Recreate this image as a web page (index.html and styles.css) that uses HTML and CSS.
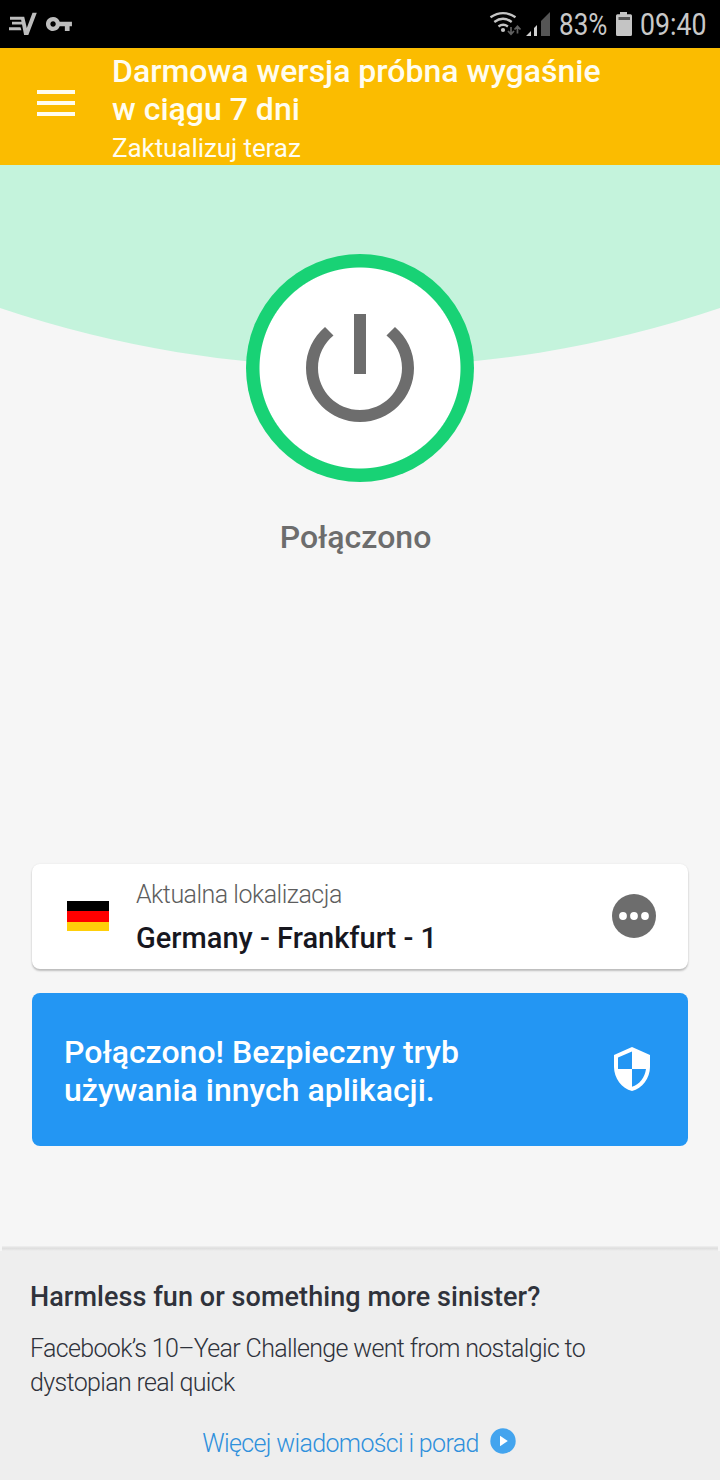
FILE: index.html
```html
<!DOCTYPE html>
<html lang="pl">
<head>
<meta charset="utf-8">
<title>VPN</title>
<link rel="stylesheet" href="styles.css">
</head>
<body>
<div class="screen">
  <div class="status">
    <svg class="status-left" width="80" height="48" viewBox="0 0 80 48" fill="#bdbdbd">
      <path d="M10 16.800h12.500l.9 3H10zM12 21.800h12l.7 2.800H12zM9 27.300h11.500l.9 2.900H9zM20.500 16.800h3.700l2.600 11.200 5.700-15.200h4.300L28.300 35h-4.200z"/>
      <path transform="translate(44.800 9.840) scale(1.180)" d="M12.650 10C11.830 7.670 9.610 6 7 6c-3.310 0-6 2.690-6 6s2.690 6 6 6c2.610 0 4.830-1.670 5.650-4H17v4h4v-4h2v-4H12.650zM7 14.300c-1.300 0-2.300-1-2.300-2.300s1-2.300 2.300-2.300 2.300 1 2.300 2.300-1 2.300-2.300 2.300z"/>
    </svg>
    <div class="status-right">
      <svg width="64" height="48" viewBox="488 0 64 48">
        <g fill="none" stroke="#c4c4c4" stroke-width="2.400">
          <path d="M490.500 17.300q12.500-8.300 25 0M494.300 22q8.700-6.300 17.400 0M498.500 26.500q4.700-3.400 9.400 0"/>
        </g>
        <circle cx="503" cy="30" r="2.100" fill="#c4c4c4"/>
        <g stroke="#606060" stroke-width="1.700" fill="none">
          <path d="M511 27v7M508 31l3 3.200 3-3.200M517.500 33.500v-7M514.500 29.500l3-3.200 3 3.200"/>
        </g>
        <path d="M526 36l5-5v5zM534 28l3-3v11h-3z" fill="#d0d0d0"/>
        <path d="M541 21l9-9v24h-9z" fill="#555"/>
      </svg>
      <span class="battery-text"><span class="narrow">83%</span></span>
      <svg width="18" height="48" viewBox="615 0 18 48">
        <path d="M620 12h7v2.200h3.500q1.500 0 1.500 1.500V34.500q0 1.500-1.500 1.500h-13q-1.500 0-1.500-1.500V15.700q0-1.500 1.500-1.500h2.500z" fill="#c4c4c4"/>
        <path d="M618.500 17h11.500v3h-11.500z" fill="#555"/>
      </svg>
      <span class="clock"><span class="narrow">09:40</span></span>
    </div>
  </div>

  <header class="header">
    <div class="menu"><i class="bar"></i><i class="bar"></i><i class="bar"></i></div>
    <div>
      <div class="title">Darmowa wersja próbna wygaśnie<br>w ciągu 7 dni</div>
      <div class="upgrade">Zaktualizuj teraz</div>
    </div>
  </header>

  <main class="main">
    <svg class="arc" width="720" height="203" viewBox="0 0 720 203"><path d="M0 0H720V143A1128 1128 0 0 1 0 143Z" fill="#c4f3dc"/></svg>
    <div class="power">
      <svg width="144" height="144" viewBox="0 0 24 24" fill="#6d6d6d"><path d="M13 3h-2v10h2V3zm4.830 2.170-1.420 1.420C17.990 7.860 19 9.810 19 12c0 3.870-3.130 7-7 7s-7-3.130-7-7c0-2.190 1.010-4.140 2.580-5.420L6.170 5.170C4.230 6.820 3 9.260 3 12c0 4.970 4.030 9 9 9s9-4.030 9-9c0-2.740-1.230-5.180-3.170-6.830z"/></svg>
    </div>
    <div class="state">Połączono</div>

    <div class="location">
      <div class="flag"><i class="black"></i><i class="red"></i><i class="gold"></i></div>
      <div class="place">
        <div class="label">Aktualna lokalizacja</div>
        <div class="name">Germany - Frankfurt - 1</div>
      </div>
      <svg width="44" height="44" viewBox="0 0 44 44"><circle cx="22" cy="22" r="22" fill="#6d6d6d"/><g fill="#fff"><circle cx="11" cy="22" r="3.900"/><circle cx="22" cy="22" r="3.900"/><circle cx="33" cy="22" r="3.900"/></g></svg>
    </div>

    <div class="secure">
      <div class="secure-text">Połączono! Bezpieczny tryb<br>używania innych aplikacji.</div>
      <svg width="48" height="48" viewBox="0 0 24 24" fill="#fff"><path d="M12 1 3 5v6c0 5.550 3.840 10.740 9 12 5.160-1.260 9-6.450 9-12V5l-9-4zm0 10.990h7c-.530 4.120-3.280 7.790-7 8.940V12H5V6.300l7-3.110v8.800z"/></svg>
    </div>
  </main>

  <div class="divider"></div>
  <footer class="news">
    <div class="news-title">Harmless fun or something more sinister?</div>
    <div class="news-text">Facebook’s 10–Year Challenge went from nostalgic to<br>dystopian real quick</div>
    <div class="more">
      <span class="more-text">Więcej wiadomości i porad</span>
      <svg class="play" width="26" height="26" viewBox="0 0 26 26"><circle cx="13" cy="13" r="12.700" fill="#43a4ee"/><path d="M10 7.800v10.400l7.800-5.200z" fill="#fff"/></svg>
    </div>
  </footer>
</div>
</body>
</html>
```
FILE: styles.css
```css
body { margin: 0; font-family: Roboto, "Liberation Sans", sans-serif; }
.screen { width: 720px; height: 1480px; overflow: hidden; background: #f6f6f6; display: flex; flex-direction: column; }
svg { display: block; flex: none; }
i { display: block; }
div, span { white-space: nowrap; }

.status { height: 48px; flex: none; background: #000; display: flex; justify-content: space-between; }
.status-right { width: 232px; display: flex; color: #c8c8c8; font-size: 31px; line-height: 50px; }
.battery-text { width: 63px; padding-left: 7px; box-sizing: border-box; }
.clock { padding-left: 7px; }
.narrow { display: inline-block; transform: scaleX(.84); transform-origin: 0 50%; }
.clock .narrow { transform: scaleX(.86); }

.header { height: 117px; flex: none; background: #fbbc00; color: #fffdf0; display: flex; box-sizing: border-box; padding: 4px 0 0 37px; }
.menu { width: 75px; padding-top: 38px; display: flex; flex-direction: column; gap: 7px; }
.bar { width: 38px; height: 4px; background: #fffdf0; }
.title { font-size: 32px; line-height: 38px; font-weight: 500; }
.upgrade { font-size: 26px; line-height: 32px; margin-top: 4px; letter-spacing: -.08px; }

.main { position: relative; height: 1081px; flex: none; display: flex; flex-direction: column; align-items: center; box-sizing: border-box; padding-top: 89px; }
.arc { position: absolute; left: 0; top: 0; }
.power { position: relative; width: 228px; height: 228px; flex: none; border-radius: 50%; background: radial-gradient(circle, #fff 100px, #18d275 101px); display: flex; align-items: center; justify-content: center; }
.state { margin: 36px 9px 0 0; font-size: 32px; line-height: 38px; font-weight: 500; color: #6d6d6d; }

.location { margin-top: 308px; width: 656px; height: 105px; flex: none; box-sizing: border-box; padding: 0 32px 1px 35px; border-radius: 8px; background: #fff; box-shadow: 0 2px 2px rgba(0,0,0,.22), 0 0 2px rgba(0,0,0,.08); display: flex; align-items: center; }
.flag { width: 42px; height: 30px; }
.black { height: 10px; background: #000; }
.red { height: 11px; background: #f00; }
.gold { height: 9px; background: #ffcf0a; }
.place { flex: 1; margin-left: 27px; padding-top: 3px; }
.label { font-size: 25px; line-height: 30px; font-weight: 300; letter-spacing: -.51px; color: #5d5d5d; }
.name { margin-top: 10px; font-size: 29px; line-height: 36px; font-weight: 500; color: #17171f; }

.secure { margin-top: 24px; width: 656px; height: 153px; flex: none; box-sizing: border-box; padding: 0 32px 1px; border-radius: 8px; background: #2396f3; color: #fff; display: flex; align-items: center; justify-content: space-between; }
.secure-text { font-size: 32px; line-height: 38px; font-weight: 500; padding-top: 4px; }

.divider { height: 5px; margin: 0 2px; flex: none; background: linear-gradient(#f0f0f0, #dedede 45%, #eee); }
.news { flex: 1; background: #eee; padding: 28px 30px 0; color: #2f323b; }
.news-title { font-size: 27px; line-height: 36px; font-weight: 500; letter-spacing: .07px; }
.news-text { margin-top: 17px; font-size: 25px; line-height: 34px; font-weight: 300; letter-spacing: -.65px; }
.more { margin: 28px 2px 0 0; display: flex; justify-content: center; align-items: center; gap: 11px; color: #2f90dc; font-size: 25px; line-height: 30px; font-weight: 300; letter-spacing: -.65px; }
.play { margin-bottom: 6px; }
```
